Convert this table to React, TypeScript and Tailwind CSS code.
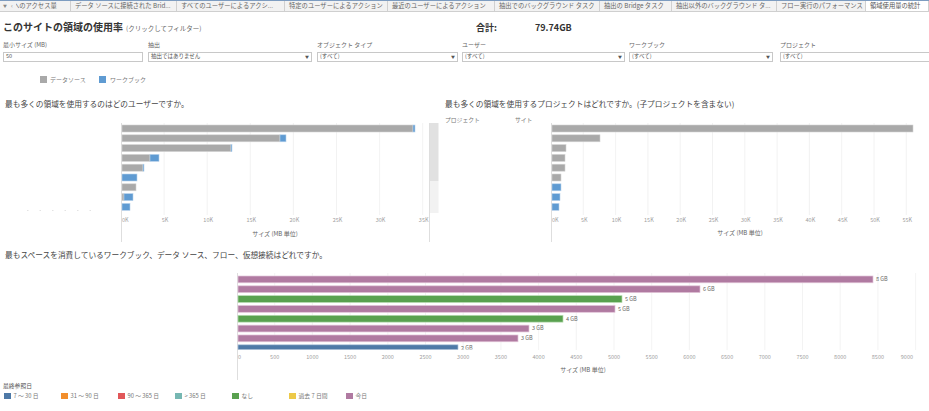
import React from "react";

const GRAY = "#a9a9a9";
const BLUE = "#5f9bd2";

const tabs = [
  { label: "へのアクセス量", w: "w-[55px]", clip: true },
  { label: "データ ソースに接続された Brid...", w: "w-[106px]" },
  { label: "すべてのユーザーによるアクシ...", w: "w-[108px]" },
  { label: "特定のユーザーによるアクション", w: "w-[103px]" },
  { label: "最近のユーザーによるアクション", w: "w-[107px]" },
  { label: "抽出でのバックグラウンド タスク", w: "w-[105px]" },
  { label: "抽出の Bridge タスク", w: "w-[72px]" },
  { label: "抽出以外のバックグラウンド タ...", w: "w-[105px]" },
  { label: "フロー実行のパフォーマンス", w: "w-[89px]" },
  { label: "領域使用量の統計", w: "w-[63px]", active: true },
];

const filters = [
  { label: "最小サイズ (MB)", value: "50", col: "w-[145px]", box: "w-[140px]", drop: false },
  { label: "抽出", value: "抽出ではありません", col: "w-[169px]", box: "w-[164px]", drop: true },
  { label: "オブジェクト タイプ", value: "(すべて)", col: "w-[145px]", box: "w-[141px]", drop: true },
  { label: "ユーザー", value: "(すべて)", col: "w-[167px]", box: "w-[163px]", drop: true },
  { label: "ワークブック", value: "(すべて)", col: "w-[151px]", box: "w-[144px]", drop: true },
  { label: "プロジェクト", value: "(すべて)", col: "w-[160px]", box: "w-[160px]", drop: false },
];

// [gray px, blue px]
const userBars = [[291, 2], [158, 6], [109, 1], [28, 9], [21, 1], [0, 15], [14, 0], [2, 9], [0, 8]];
const projectBars = [[361, 0], [48, 0], [14, 0], [13, 0], [13, 0], [9, 0], [0, 9], [0, 8], [0, 7]];

const objectBars = [
  { w: 635, color: "#b07aa1", edge: "#e3c6d9", label: "8 GB" },
  { w: 462, color: "#b07aa1", edge: "#e3c6d9", label: "6 GB" },
  { w: 384, color: "#59a14f", edge: "#b9dcb3", label: "5 GB" },
  { w: 377, color: "#b07aa1", edge: "#e3c6d9", label: "5 GB" },
  { w: 325, color: "#59a14f", edge: "#b9dcb3", label: "4 GB" },
  { w: 291, color: "#b07aa1", edge: "#e3c6d9", label: "3 GB" },
  { w: 280, color: "#b07aa1", edge: "#e3c6d9", label: "3 GB" },
  { w: 220, color: "#4e79a7", edge: "#b3c6dc", label: "2 GB" },
];

const lastRef = [
  { label: "7 ～ 30 日", color: "bg-[#4e79a7]" },
  { label: "31 ～ 90 日", color: "bg-[#f28e2b]" },
  { label: "90 ～ 365 日", color: "bg-[#e15759]" },
  { label: "> 365 日", color: "bg-[#76b7b2]" },
  { label: "なし", color: "bg-[#59a14f]" },
  { label: "過去 7 日間", color: "bg-[#edc948]" },
  { label: "今日", color: "bg-[#b07aa1]" },
];

function StackBars({ x0, top, bars }: { x0: number; top: number; bars: number[][] }) {
  return (
    <g>
      {bars.map(([g, b], i) => {
        const y = top + i * 9.8;
        return (
          <g key={i}>
            {g > 0 && <rect x={x0} y={y} width={g} height={7} fill={GRAY} stroke="#d4d4d4" strokeWidth={0.6} />}
            {b > 0 && <rect x={x0 + g} y={y} width={b} height={7} fill={BLUE} stroke="#b9d3ec" strokeWidth={0.6} />}
          </g>
        );
      })}
    </g>
  );
}

function UserChart() {
  const x0 = 121;
  const step = 43.1;
  return (
    <svg width={440} height={133} className="shrink-0">
      {Array.from({ length: 8 }).map((_, i) =>
        i > 0 ? <line key={i} x1={x0 + i * step} x2={x0 + i * step} y1={14} y2={106} stroke="#efefef" strokeWidth={0.8} /> : null
      )}
      <line x1={x0 + 0.5} x2={x0 + 0.5} y1={14} y2={133} stroke="#d6d6d6" strokeWidth={0.8} />
      <StackBars x0={x0 + 1} top={16} bars={userBars} />
      <line x1={27} x2={94} y1={101.5} y2={101.5} stroke="#dcdcdc" strokeWidth={0.8} strokeDasharray="1.5 11" />
      {Array.from({ length: 8 }).map((_, i) => (
        <text
          key={i}
          x={i === 0 ? x0 + 1 : x0 + i * step + 1}
          y={113}
          fontSize={5.5}
          fill="#a0a0a0"
          textAnchor={i === 0 ? "start" : "middle"}
        >
          {i * 5}K
        </text>
      ))}
      <text x={275} y={126.5} fontSize={6} fill="#666" textAnchor="middle">
        サイズ (MB 単位)
      </text>
      <line x1={429.5} x2={429.5} y1={14} y2={133} stroke="#d6d6d6" strokeWidth={0.8} />
      <rect x={430} y={14} width={8.5} height={58} fill="#e1e1e1" />
      <rect x={430} y={72} width={8.5} height={32} fill="#f2f2f2" />
    </svg>
  );
}

function ProjectChart() {
  const x0 = 111;
  const step = 32.3;
  return (
    <svg width={489} height={133} className="shrink-0">
      <text x={5} y={12.5} fontSize={5.8} fill="#777">
        プロジェクト
      </text>
      <text x={75} y={12.5} fontSize={5.8} fill="#777">
        サイト
      </text>
      {Array.from({ length: 12 }).map((_, i) =>
        i > 0 ? <line key={i} x1={x0 + i * step} x2={x0 + i * step} y1={14} y2={106} stroke="#efefef" strokeWidth={0.8} /> : null
      )}
      <line x1={x0 + 0.5} x2={x0 + 0.5} y1={14} y2={133} stroke="#d6d6d6" strokeWidth={0.8} />
      <StackBars x0={x0 + 1} top={16} bars={projectBars} />
      {Array.from({ length: 12 }).map((_, i) => (
        <text
          key={i}
          x={i === 0 ? x0 + 1 : x0 + i * step + 1}
          y={113}
          fontSize={5.5}
          fill="#a0a0a0"
          textAnchor={i === 0 ? "start" : "middle"}
        >
          {i * 5}K
        </text>
      ))}
      <text x={300} y={126} fontSize={6} fill="#666" textAnchor="middle">
        サイズ (MB 単位)
      </text>
    </svg>
  );
}

function ObjectChart() {
  const x0 = 237;
  const step = 37.7;
  return (
    <svg width={929} height={120} className="block">
      <defs>
        <clipPath id="pane">
          <rect x={0} y={0} width={929} height={89.5} />
        </clipPath>
      </defs>
      {Array.from({ length: 19 }).map((_, i) =>
        i > 0 ? <line key={i} x1={x0 + i * step} x2={x0 + i * step} y1={13} y2={90} stroke="#f0f0f0" strokeWidth={0.8} /> : null
      )}
      <line x1={x0 + 0.5} x2={x0 + 0.5} y1={13} y2={120} stroke="#d6d6d6" strokeWidth={0.8} />
      <g clipPath="url(#pane)">
        {objectBars.map((b, i) => {
          const y = 16 + i * 9.83;
          return (
            <g key={i}>
              <rect x={x0 + 1} y={y} width={b.w} height={6.8} fill={b.color} stroke={b.edge} strokeWidth={0.7} />
              <text x={x0 + b.w + 4} y={y + 5.2} fontSize={5.5} fill="#666">
                {b.label}
              </text>
            </g>
          );
        })}
      </g>
      {Array.from({ length: 19 }).map((_, i) => (
        <text
          key={i}
          x={i === 0 ? x0 + 1 : i === 18 ? 913 : x0 + i * step}
          y={99.3}
          fontSize={5.5}
          fill="#a0a0a0"
          textAnchor={i === 0 ? "start" : i === 18 ? "end" : "middle"}
        >
          {i * 500}
        </text>
      ))}
      <text x={583} y={112} fontSize={6} fill="#666" textAnchor="middle">
        サイズ (MB 単位)
      </text>
    </svg>
  );
}

export default function App() {
  return (
    <div className="h-[411px] w-[929px] overflow-hidden bg-white font-['Noto_Sans_CJK_JP','Noto_Sans',sans-serif] text-[#333]">
      {/* Tab strip */}
      <div className="flex h-[12px] overflow-hidden whitespace-nowrap border-t border-b border-t-[#7d9cc0] border-b-[#cfcfcf] bg-[#f2f2f2] text-[6.3px] leading-none text-[#666]">
        <div className="flex w-[16px] shrink-0 items-center gap-[4px] pl-[3px] text-[#888]">
          <span className="text-[4px]">▼</span>
          <span className="text-[6px]">‹</span>
        </div>
        {tabs.map((t) => (
          <div
            key={t.label}
            className={`flex shrink-0 items-center overflow-hidden border-r border-[#d0d0d0] ${t.w} ${t.active ? "bg-white text-[#555]" : ""} ${t.clip ? "" : "pl-[4px]"}`}
          >
            <span className={t.clip ? "-ml-[3px]" : ""}>{t.label}</span>
          </div>
        ))}
      </div>

      {/* Title + total */}
      <div className="flex h-[22px] items-end pl-[3px] leading-[12px]">
        <div className="flex w-[473px] items-baseline">
          <span className="text-[10px] font-bold text-[#333]">このサイトの領域の使用率</span>
          <span className="ml-[3px] text-[6.5px] text-[#666]">(クリックしてフィルター)</span>
        </div>
        <div className="w-[59px] text-[9px] font-bold text-[#333]">合計:</div>
        <div className="text-[9px] font-semibold text-[#333]">79.74GB</div>
      </div>

      {/* Filters */}
      <div className="mt-[7px] flex pl-[3px]">
        {filters.map((f) => (
          <div key={f.label} className={`shrink-0 ${f.col}`}>
            <div className="h-[8px] text-[6px] leading-[8px] text-[#666]">{f.label}</div>
            <div
              className={`mt-[3px] flex h-[10px] items-center justify-between border border-[#c8c8c8] bg-white px-[2px] text-[5.5px] leading-none text-[#555] ${f.box}`}
            >
              <span>{f.value}</span>
              {f.drop && <span className="text-[4px] text-[#555]">▼</span>}
            </div>
          </div>
        ))}
      </div>

      {/* Color legend */}
      <div className="mt-[14px] flex h-[7px] items-center pl-[40px] text-[6px] leading-none text-[#777]">
        <div className="flex w-[59px] items-center">
          <span className="h-[7px] w-[7px] bg-[#a9a9a9]" />
          <span className="ml-[3px]">データソース</span>
        </div>
        <div className="flex items-center">
          <span className="h-[7px] w-[7px] bg-[#5f9bd2]" />
          <span className="ml-[4px]">ワークブック</span>
        </div>
      </div>

      {/* Section titles */}
      <div className="mt-[16px] flex h-[10px] text-[7.7px] leading-[10px] text-[#444]">
        <div className="w-[445px] pl-[5px]">最も多くの領域を使用するのはどのユーザーですか。</div>
        <div>最も多くの領域を使用するプロジェクトはどれですか。(子プロジェクトを含まない)</div>
      </div>

      <div className="flex h-[133px]">
        <UserChart />
        <ProjectChart />
      </div>

      <div className="mt-[8px] h-[10px] pl-[5px] text-[7.7px] leading-[10px] text-[#444]">
        最もスペースを消費しているワークブック、データ ソース、フロー、仮想接続はどれですか。
      </div>

      <ObjectChart />

      {/* Last referenced legend */}
      <div className="mt-[2px] h-[8px] pl-[3px] text-[5.8px] leading-[8px] text-[#555]">最終参照日</div>
      <div className="mt-[2px] flex h-[8px] items-center pl-[4px] text-[5.8px] leading-none text-[#777]">
        {lastRef.map((l) => (
          <div key={l.label} className="flex w-[57px] shrink-0 items-center">
            <span className={`h-[6.5px] w-[6.5px] ${l.color}`} />
            <span className="ml-[3px]">{l.label}</span>
          </div>
        ))}
      </div>
    </div>
  );
}
